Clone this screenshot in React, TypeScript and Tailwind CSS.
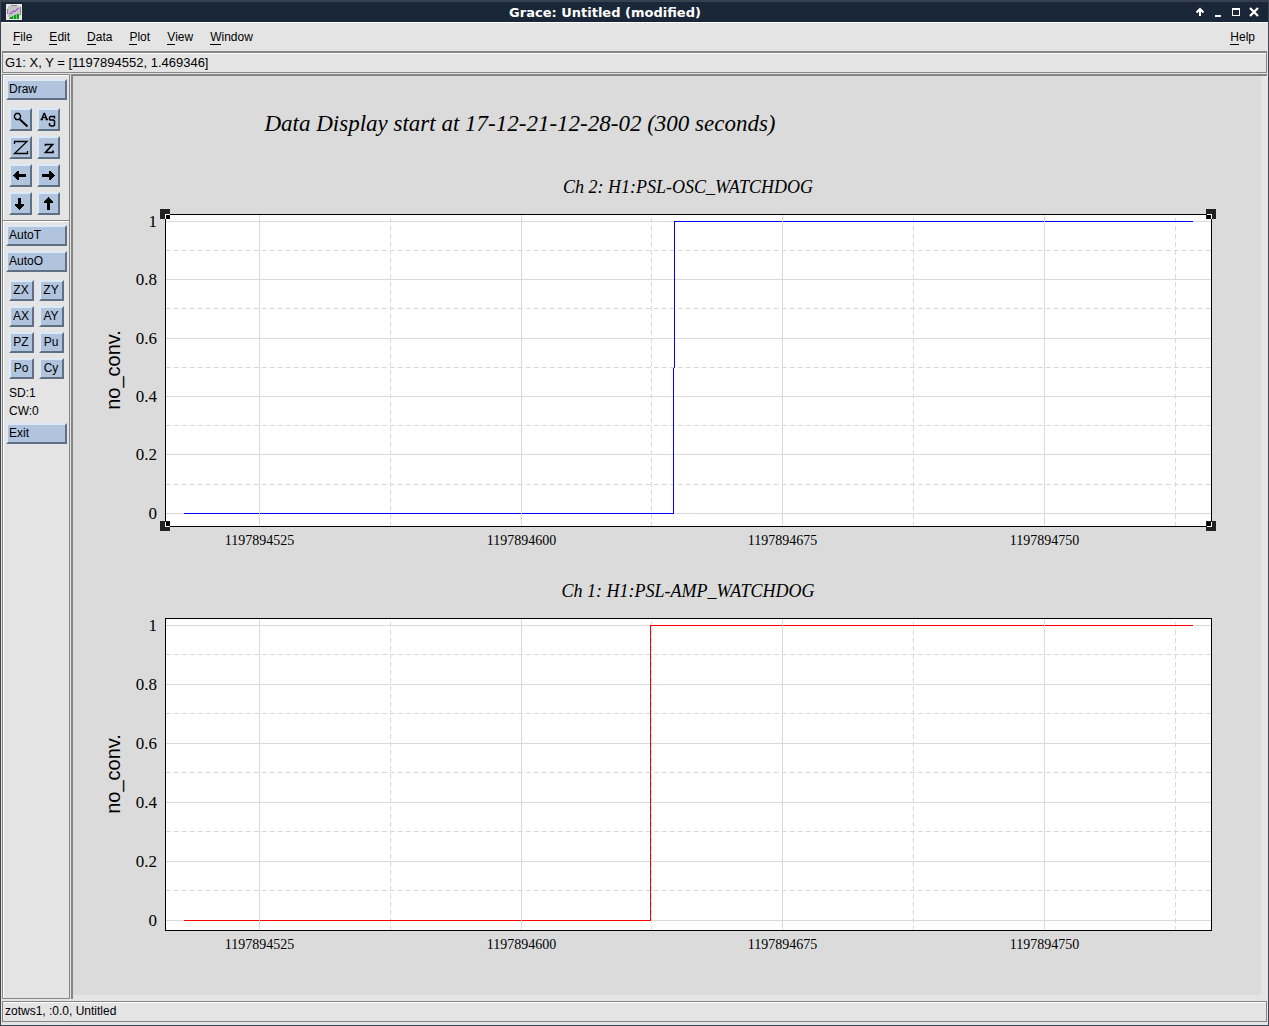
import React from "react";

const menus = ["File", "Edit", "Data", "Plot", "View", "Window"];

const raised =
  "bg-[#b0c4de] border-2 border-t-[#dde9f7] border-l-[#dde9f7] border-b-[#5f7084] border-r-[#5f7084] text-black";

function MenuItem({ label }: { label: string }) {
  return (
    <button type="button" className="flex text-[12px] leading-[14px]">
      <span className="border-b border-black">{label[0]}</span>
      {label.slice(1)}
    </button>
  );
}

function WideButton({ label }: { label: string }) {
  return (
    <button type="button" className={`${raised} block h-[21px] w-full pl-px text-left text-[12px] leading-[17px]`}>
      {label}
    </button>
  );
}

function SmallButton({ label }: { label: string }) {
  return (
    <button type="button" className={`${raised} h-[21px] pr-px text-center text-[12px] leading-[17px]`}>
      {label}
    </button>
  );
}

const iconTools: { name: string; icon: React.ReactNode }[] = [
  {
    name: "Zoom",
    icon: (
      <g fill="none" stroke="#000">
        <path d="M6 3.500h3l1.500 2v2L9 9.500H6l-1.500-2v-2z" strokeWidth="1.300" />
        <path d="M10 9.500l7.500 7" strokeWidth="2" />
      </g>
    ),
  },
  {
    name: "Autoscale",
    icon: (
      <g fill="none" stroke="#000">
        <path d="M3.500 9.500L6 3.500h.5l2.500 6M2.500 9.500H5M7.500 9.500H10M4.500 7.500h4" strokeWidth="1.300" />
        <path d="M16.500 8.500v-2h-4l-1 1v2l1 .5h3l1 1v4l-1 1h-2.500l-1.500-1v-2" strokeWidth="1.500" />
      </g>
    ),
  },
  {
    name: "Zoom in",
    icon: <path d="M4.500 6V3.500H17L4.500 15.500h13V13" fill="none" stroke="#000" strokeWidth="1.300" />,
  },
  {
    name: "Zoom out",
    icon: <path d="M7.500 8V6.500h7l-7 8h7.500V12.500" fill="none" stroke="#000" strokeWidth="1.700" />,
  },
  {
    name: "Scroll left",
    icon: <path d="M3 9h1V8h1V7h1V6h1V5h2v3h7v3H9v3H7v-1H6v-1H5v-1H4v-1H3z" />,
  },
  {
    name: "Scroll right",
    icon: <path d="M17 9h-1V8h-1V7h-1V6h-1V5h-2v3H4v3h7v3h2v-1h1v-1h1v-1h1v-1h1z" />,
  },
  {
    name: "Scroll down",
    icon: <path d="M9 16V15H8v-1H7v-1H6v-1H5v-2h3V4h3v6h3v2h-1v1h-1v1h-1v1h-1v1z" />,
  },
  {
    name: "Scroll up",
    icon: <path d="M10 3v1H9v1H8v1H7v1H6v2h3v7h3V9h3V7h-1V6h-1V5h-1V4h-1V3z" />,
  },
];

const smallTools = ["ZX", "ZY", "AX", "AY", "PZ", "Pu", "Po", "Cy"];

function AppIcon() {
  return (
    <svg width="16" height="16" viewBox="0 0 16 16" aria-hidden="true" shapeRendering="crispEdges">
      <rect width="16" height="16" fill="#e8e4e0" />
      <path d="M2 2h3V1h6v1h3v10h-1v3H3v-2H2v-3H1V5h1z" fill="#c4c4c4" />
      <path d="M5 1h6v1H5zM14 3h1v8h-1zM1 5h1v5H1zM3 14h10v1H3z" fill="#858585" />
      <path d="M3 9h2V8h1V7h1V6h1v1h1V6h1V5h1V4h2v1h-1v1h-1v1h-1v1H8V8H7v1H6v1H3z" fill="#a765d8" />
      <path d="M4 13h2v2H4zM6 12h2v3H6zM8 11h2v4H8zM10 10h3v5h-3z" fill="#169a27" />
      <path d="M7.500 12v3M10.500 10v5" stroke="#62d96a" />
    </svg>
  );
}

const windowControls: { name: string; icon: React.ReactNode }[] = [
  { name: "Shade", icon: <path d="M5 9V2.500M1.500 5.500L5 2l3.500 3.500" fill="none" stroke="#fff" strokeWidth="2" /> },
  { name: "Minimize", icon: <path d="M2 8h6v2H2z" fill="#fff" /> },
  { name: "Maximize", icon: <path d="M1 1h8v8H1zM2 3v5h6V3z" fill="#fff" fillRule="evenodd" /> },
  { name: "Close", icon: <path d="M1 1l8 8M9 1l-8 8" fill="none" stroke="#fff" strokeWidth="2.200" /> },
];

type GraphProps = {
  title: string;
  bottom: number;
  color: string;
  trace: [number, number][][];
  selected?: boolean;
};

const LEFT = 92.5;
const RIGHT = 1138.5;
const TOP = 9.5;
const BASE = 321.5;
const ONE = 16.5;

const xMajors = [
  { x: 186.5, label: "1197894525" },
  { x: 448.5, label: "1197894600" },
  { x: 709.5, label: "1197894675" },
  { x: 971.5, label: "1197894750" },
];
const xMinors = [317.5, 578.5, 840.5, 1102.5];

function Graph({ title, bottom, color, trace, selected }: GraphProps) {
  const yFor = (v: number) => Math.round(bottom - v * (bottom - ONE) - 0.8) + 0.5;
  const path = trace
    .map((run) => run.map(([x, v], i) => `${i ? "L" : "M"}${x} ${yFor(v)}`).join(""))
    .join("");
  return (
    <figure className="pb-4">
      <figcaption className="pl-[42px] text-center font-['Liberation_Serif',serif] text-[18px] italic leading-[20px]">
        {title}
      </figcaption>
      <svg viewBox="0 0 1188 360" className="mt-2 block w-full" role="img" aria-label={title}>
        <rect x={LEFT} y={TOP} width={RIGHT - LEFT} height={BASE - TOP} fill="#fff" />
        <g stroke="#dadada" shapeRendering="crispEdges">
          {[0, 0.2, 0.4, 0.6, 0.8, 1].map((v) => (
            <path key={v} d={`M${LEFT} ${yFor(v)}H${RIGHT}`} />
          ))}
          {[0.1, 0.3, 0.5, 0.7, 0.9].map((v) => (
            <path key={v} d={`M${LEFT} ${yFor(v)}H${RIGHT}`} strokeDasharray="5 3" />
          ))}
          {xMinors.map((x) => (
            <path key={x} d={`M${x} ${BASE}V${TOP}`} strokeDasharray="5 3" />
          ))}
        </g>
        <path d={path} fill="none" stroke={color} shapeRendering="crispEdges" />
        <g stroke="#dadada" shapeRendering="crispEdges">
          {xMajors.map((m) => (
            <path key={m.x} d={`M${m.x} ${BASE}V${TOP}`} />
          ))}
        </g>
        <rect x={LEFT} y={TOP} width={RIGHT - LEFT} height={BASE - TOP} fill="none" stroke="#000" shapeRendering="crispEdges" />
        {selected &&
          [
            [LEFT, TOP, 1, 1],
            [RIGHT, TOP, -1, 1],
            [LEFT, BASE, 1, -1],
            [RIGHT, BASE, -1, -1],
          ].map(([x, y, dx, dy]) => (
            <g key={`${x}-${y}`} shapeRendering="crispEdges">
              <rect x={x - 5.5} y={y - 5.5} width="10" height="10" fill="#222" />
              <path d={`M${x} ${y + dy * 4.5}V${y}H${x + dx * 4.5}`} fill="none" stroke="#fff" />
              <rect x={x + dx * 2.5 - 2} y={y + dy * 2.5 - 2} width="4" height="4" fill="#000" />
            </g>
          ))}
        <g fontFamily="Liberation Serif, serif" fontSize="17" textAnchor="end">
          {["0", "0.2", "0.4", "0.6", "0.8", "1"].map((label) => (
            <text key={label} x="84" y={yFor(Number(label)) + 5}>
              {label}
            </text>
          ))}
        </g>
        <g fontFamily="Liberation Serif, serif" fontSize="14" textAnchor="middle">
          {xMajors.map((m) => (
            <text key={m.label} x={m.x} y="340">
              {m.label}
            </text>
          ))}
        </g>
        <text transform="translate(47 165) rotate(-90)" fontFamily="Liberation Sans, sans-serif" fontSize="20" textAnchor="middle">
          no_conv.
        </text>
      </svg>
    </figure>
  );
}

export default function App() {
  return (
    <div className="flex min-h-screen flex-col border-x border-b border-[#3a4654] bg-[#e4e4e4] font-['Liberation_Sans',sans-serif] text-[12px] text-black">
      <header className="flex h-[22px] items-center border-t-2 border-[#35414f] bg-[#1a2738] pl-[5px] pr-[9px]">
        <AppIcon />
        <h1 className="grow pr-[7px] pt-px text-center font-['DejaVu_Sans',sans-serif] text-[13px] font-bold leading-[18px] text-white">
          Grace: Untitled (modified)
        </h1>
        <div className="flex gap-2">
          {windowControls.map((c) => (
            <button key={c.name} type="button" aria-label={c.name}>
              <svg width="10" height="10" viewBox="0 0 10 10" className="block">
                {c.icon}
              </svg>
            </button>
          ))}
        </div>
      </header>

      <div className="mx-px flex flex-col">
        <nav className="flex h-[31px] items-center gap-[17px] border-b-2 border-t border-b-[#858585] border-t-white pl-[11px] pr-3 pt-px">
          {menus.map((m) => (
            <MenuItem key={m} label={m} />
          ))}
          <div className="ml-auto">
            <MenuItem label="Help" />
          </div>
        </nav>
        <div className="h-[20px] border border-t-0 border-[#858585] pl-[2px] text-[13px] leading-[20px] shadow-[inset_0_1px_#fff]">
          G1: X, Y = [1197894552, 1.469346]
        </div>
      </div>

      <div className="mx-px mt-px flex grow">
        <aside className="w-[68px] shrink-0 border border-[#858585] pl-[3px] pr-[2px] pt-1 shadow-[inset_1px_1px_#fff]">
          <WideButton label="Draw" />
          <div className="mt-2 grid grid-cols-[23px_23px] gap-[5px] pl-[3px]">
            {iconTools.map((t) => (
              <button key={t.name} type="button" aria-label={t.name} className={`${raised} h-[23px]`}>
                <svg width="19" height="19" viewBox="1 0 19 19" className="block">
                  {t.icon}
                </svg>
              </button>
            ))}
          </div>
          <hr className="-ml-[3px] -mr-[2px] mb-[3px] mt-[5px] h-[2px] border-b border-t border-b-white border-t-[#858585]" />
          <div className="flex flex-col gap-[5px]">
            <WideButton label="AutoT" />
            <WideButton label="AutoO" />
          </div>
          <div className="mt-2 grid grid-cols-[25px_25px] gap-[5px] pl-[3px]">
            {smallTools.map((t) => (
              <SmallButton key={t} label={t} />
            ))}
          </div>
          <div className="mb-[3px] mt-[5px] pl-[3px] text-[12px] leading-[18px]">
            <p>SD:1</p>
            <p>CW:0</p>
          </div>
          <WideButton label="Exit" />
        </aside>

        <main className="ml-px grow border-l-2 border-t-2 border-[#858585] bg-[#e4e4e4] pb-1 pr-[6px]">
          <div className="h-full bg-[#dbdbdb] pt-[33px]">
            <h2 className="pr-[294px] text-center font-['Liberation_Serif',serif] text-[23px] italic leading-[30px]">
              Data Display start at 17-12-21-12-28-02 (300 seconds)
            </h2>
            <div className="pt-[38px]">
              <Graph
                title="Ch 2: H1:PSL-OSC_WATCHDOG"
                bottom={308.5}
                color="#0000ff"
                trace={[
                  [[111, 0], [600.5, 0], [600.5, 0.5]],
                  [[601.5, 0.5], [601.5, 1], [1120, 1]],
                ]}
                selected
              />
              <Graph
                title="Ch 1: H1:PSL-AMP_WATCHDOG"
                bottom={311.5}
                color="#ff0000"
                trace={[[[111, 0], [577.5, 0], [577.5, 1], [1120, 1]]]}
              />
            </div>
          </div>
        </main>
      </div>

      <footer className="mx-px mb-[3px] mt-[2px] h-[21px] border border-[#858585] pl-[2px] text-[12px] leading-[18px] shadow-[inset_0_1px_#fff]">
        zotws1, :0.0, Untitled
      </footer>
    </div>
  );
}
